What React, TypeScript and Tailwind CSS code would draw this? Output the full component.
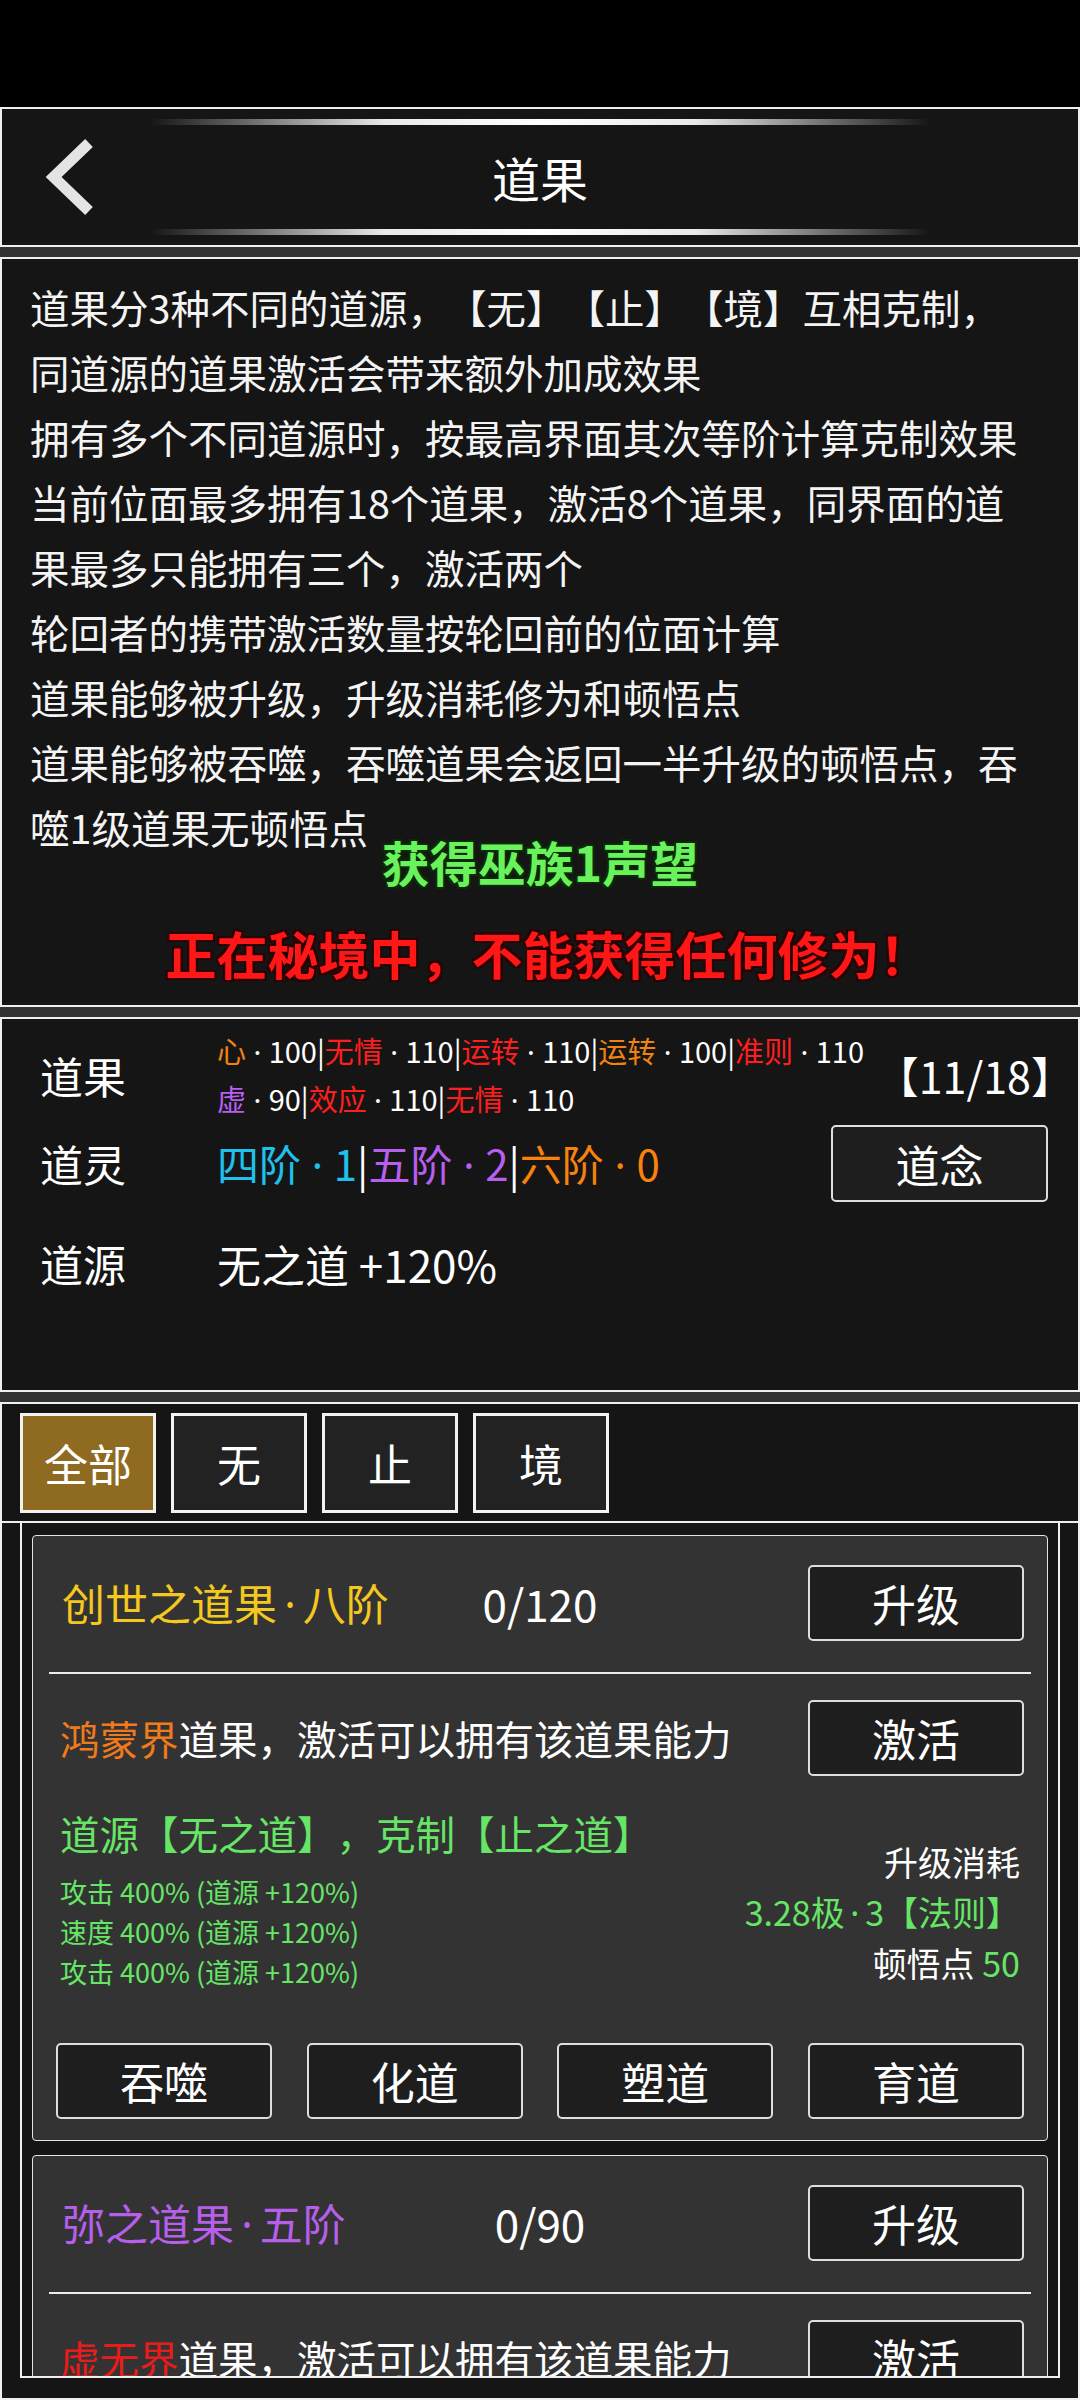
import React from "react";

const infoLines = [
  "同道源的道果激活会带来额外加成效果",
  "拥有多个不同道源时，按最高界面其次等阶计算克制效果",
  "当前位面最多拥有18个道果，激活8个道果，同界面的道",
  "果最多只能拥有三个，激活两个",
  "轮回者的携带激活数量按轮回前的位面计算",
  "道果能够被升级，升级消耗修为和顿悟点",
  "道果能够被吞噬，吞噬道果会返回一半升级的顿悟点，吞",
  "噬1级道果无顿悟点",
];

function Gap() {
  return <div className="h-[10px] bg-[#333333]" />;
}

function GlowLine() {
  return (
    <div className="h-[6px] rounded-full bg-[linear-gradient(to_right,rgba(255,255,255,0),rgba(255,255,255,0.35)_12%,rgba(255,255,255,0.9)_30%,#ffffff_50%,rgba(255,255,255,0.9)_70%,rgba(255,255,255,0.35)_88%,rgba(255,255,255,0))]" />
  );
}

function Dot({ wide }: { wide?: boolean }) {
  return (
    <span
      className={
        "inline-block text-center font-['Noto_Sans',sans-serif] " + (wide ? "w-[0.78em]" : "w-[0.6em]")
      }
    >
      ·
    </span>
  );
}

function Btn({ label }: { label: string }) {
  return (
    <div className="flex h-[76px] w-[216px] items-center justify-center rounded-[5px] border-2 border-[#dedede] bg-[#1e1e1e] text-[44px] leading-none text-white">
      {label}
    </div>
  );
}

function Tab({ label, active }: { label: string; active?: boolean }) {
  return (
    <div
      className={
        "flex h-[100px] w-[136px] items-center justify-center border-[3px] border-[#f2f2f2] text-[44px] leading-none text-white " +
        (active ? "bg-[#8f6b22]" : "bg-[#222222]")
      }
    >
      {label}
    </div>
  );
}

function Sep() {
  return <span className="text-white">|</span>;
}

export default function App() {
  return (
    <div className="h-[2400px] w-[1080px] overflow-hidden bg-black font-['Noto_Sans_CJK_SC','Noto_Sans',sans-serif] text-white">
      <div className="h-[107px] bg-black" />

      {/* header */}
      <div className="grid h-[140px] grid-cols-[148px_780px_1fr] border-2 border-[#efefef] bg-[#151515]">
        <div className="flex items-center pl-[38px]">
          <svg width="56" height="80" viewBox="0 0 56 80">
            <polyline
              points="49,6 13.6,40 49,74"
              fill="none"
              stroke="#e4e4e4"
              strokeWidth="11"
              strokeLinejoin="miter"
              strokeLinecap="butt"
            />
          </svg>
        </div>
        <div className="flex flex-col py-[10px]">
          <GlowLine />
          <div className="flex flex-1 items-center justify-center text-[48px] leading-none">道果</div>
          <GlowLine />
        </div>
        <div />
      </div>

      <Gap />

      {/* info */}
      <div className="relative h-[750px] border-2 border-[#efefef] bg-[#151515] px-[28px] pt-[15px] text-[39.5px] leading-[65px] text-[#f4f4f4]">
        <div className="whitespace-nowrap [text-spacing-trim:space-all]">
          道果分3种不同的道源，【无】【止】【境】互相克制，
        </div>
        {infoLines.map((l) => (
          <div key={l} className="whitespace-nowrap">
            {l}
          </div>
        ))}
        <div className="absolute left-0 right-0 top-[577px] text-center text-[48px] font-bold leading-[50px] text-[#6af25c] [text-shadow:-2px_-2px_0_#0b2a08,2px_-2px_0_#0b2a08,-2px_2px_0_#0b2a08,2px_2px_0_#0b2a08]">
          获得巫族1声望
        </div>
        <div className="absolute left-0 right-0 top-[667px] pl-[16px] text-center text-[51px] font-bold leading-[54px] text-[#ff1616] [text-spacing-trim:space-all] [text-shadow:-2px_-2px_0_#2a0000,2px_-2px_0_#2a0000,-2px_2px_0_#2a0000,2px_2px_0_#2a0000]">
          正在秘境中，不能获得任何修为！
        </div>
      </div>

      <Gap />

      {/* stats */}
      <div className="h-[375px] border-2 border-[#efefef] bg-[#151515] pl-[38px] pr-[30px] pt-[10px]">
        <div className="flex h-[92px] items-center">
          <div className="w-[177px] shrink-0 text-[43px] leading-none">道果</div>
          <div className="min-w-0 flex-1 whitespace-nowrap text-[29px] leading-[46px]">
            <div>
              <span className="text-[#f0820f]">心</span>
              <Dot wide />
              100
              <Sep />
              <span className="text-[#ff1e1e]">无情</span>
              <Dot wide />
              110
              <Sep />
              <span className="text-[#ff1e1e]">运转</span>
              <Dot wide />
              110
              <Sep />
              <span className="text-[#f0820f]">运转</span>
              <Dot wide />
              100
              <Sep />
              <span className="text-[#ff1e1e]">准则</span>
              <Dot wide />
              110
            </div>
            <div>
              <span className="text-[#b85ff0]">虚</span>
              <Dot wide />
              90
              <Sep />
              <span className="text-[#ff1e1e]">效应</span>
              <Dot wide />
              110
              <Sep />
              <span className="text-[#ff1e1e]">无情</span>
              <Dot wide />
              110
            </div>
          </div>
          <div className="-mr-[26px] shrink-0 text-[43px] leading-none">【11/18】</div>
        </div>

        <div className="mt-[4px] flex h-[77px] items-center">
          <div className="w-[177px] shrink-0 text-[43px] leading-none">道灵</div>
          <div className="flex-1 whitespace-nowrap text-[42px] leading-none">
            <span className="text-[#1ec0ec]">
              四阶
              <Dot wide />1
            </span>
            <Sep />
            <span className="text-[#b95ff0]">
              五阶
              <Dot wide />2
            </span>
            <Sep />
            <span className="text-[#f8820e]">
              六阶
              <Dot wide />0
            </span>
          </div>
          <div className="flex h-[77px] w-[217px] shrink-0 items-center justify-center rounded-[5px] border-2 border-[#dedede] bg-[#1e1e1e] text-[44px] leading-none">
            道念
          </div>
        </div>

        <div className="mt-[23px] flex h-[77px] items-center">
          <div className="w-[177px] shrink-0 text-[43px] leading-none">道源</div>
          <div className="text-[44px] leading-none">无之道 +120%</div>
        </div>
      </div>

      <Gap />

      {/* tabs + list */}
      <div className="flex h-[998px] flex-col border-2 border-[#efefef] bg-[#151515]">
        <div className="flex h-[117px] shrink-0 items-center gap-[15px] pl-[18px]">
          <Tab label="全部" active />
          <Tab label="无" />
          <Tab label="止" />
          <Tab label="境" />
        </div>
        <div className="h-[2px] shrink-0 bg-[#efefef]" />
        <div className="mx-[18px] flex h-[855px] shrink-0 flex-col gap-[14px] overflow-hidden border-x-2 border-b-2 border-[#efefef] px-[10px] pt-[12px]">
          {/* card 1 */}
          <div className="shrink-0 rounded-[4px] border border-[#e4e4e4] bg-[#333333] px-[23px] pb-[21px] pt-[29px]">
            <div className="grid h-[76px] grid-cols-[1fr_auto_1fr] items-center">
              <div className="pl-[6px] text-[43px] leading-none text-[#f4c81e]">
                创世之道果
                <Dot />
                八阶
              </div>
              <div className="text-[44px] leading-none">0/120</div>
              <div className="flex justify-end">
                <Btn label="升级" />
              </div>
            </div>
            <div className="-mx-[7px] mt-[31px] h-[2px] bg-[#ececec]" />
            <div className="mt-[26px] flex h-[76px] items-center justify-between">
              <div className="pl-[4px] text-[39.5px] leading-none">
                <span className="text-[#f07a1c]">鸿蒙界</span>道果，激活可以拥有该道果能力
              </div>
              <Btn label="激活" />
            </div>
            <div className="mt-[32px] flex items-start justify-between">
              <div className="pl-[4px] text-[#66e566]">
                <div className="text-[39.5px] leading-[50px] [text-spacing-trim:space-all]">
                  道源【无之道】，克制【止之道】
                </div>
                <div className="mt-[14px] text-[27px] leading-[40px]">
                  <div>攻击 400% (道源 +120%)</div>
                  <div>速度 400% (道源 +120%)</div>
                  <div>攻击 400% (道源 +120%)</div>
                </div>
              </div>
              <div className="mt-[29px] pr-[4px] text-right text-[34px] leading-[50px]">
                <div>升级消耗</div>
                <div className="text-[#66e566]">
                  3.28极
                  <Dot />3【法则】
                </div>
                <div>
                  顿悟点 <span className="text-[#66e566]">50</span>
                </div>
              </div>
            </div>
            <div className="mt-[51px] flex justify-between">
              <Btn label="吞噬" />
              <Btn label="化道" />
              <Btn label="塑道" />
              <Btn label="育道" />
            </div>
          </div>

          {/* card 2 */}
          <div className="shrink-0 rounded-[4px] border border-[#e4e4e4] bg-[#333333] px-[23px] pb-[21px] pt-[29px]">
            <div className="grid h-[76px] grid-cols-[1fr_auto_1fr] items-center">
              <div className="pl-[6px] text-[43px] leading-none text-[#b75fea]">
                弥之道果
                <Dot />
                五阶
              </div>
              <div className="text-[44px] leading-none">0/90</div>
              <div className="flex justify-end">
                <Btn label="升级" />
              </div>
            </div>
            <div className="-mx-[7px] mt-[31px] h-[2px] bg-[#ececec]" />
            <div className="mt-[26px] flex h-[76px] items-center justify-between">
              <div className="pl-[4px] text-[39.5px] leading-none">
                <span className="text-[#e81c1c]">虚无界</span>道果，激活可以拥有该道果能力
              </div>
              <Btn label="激活" />
            </div>
          </div>
        </div>
      </div>
    </div>
  );
}
